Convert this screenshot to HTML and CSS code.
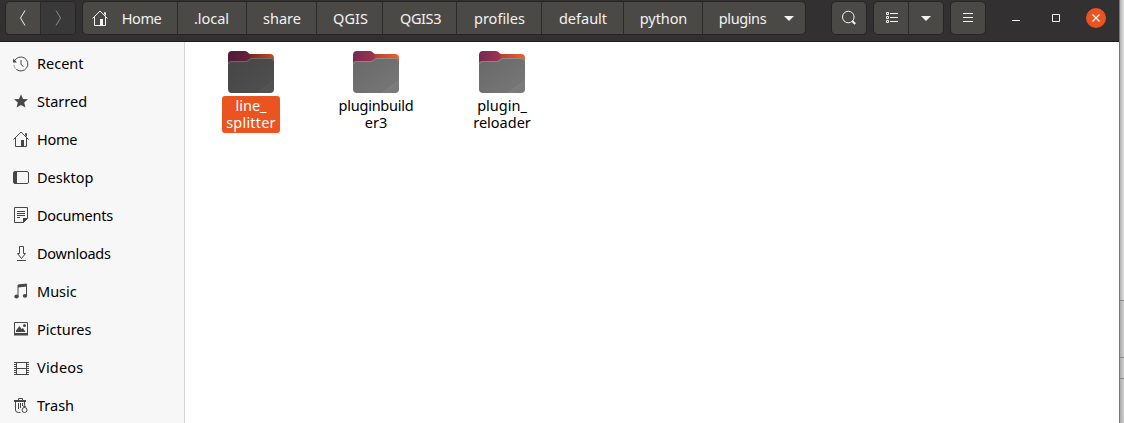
FILE: index.html
```html
<!DOCTYPE html>
<html lang="en">
<head>
<meta charset="utf-8">
<title>plugins</title>
<link rel="stylesheet" href="styles.css">
</head>
<body>
<svg class="defs" width="0" height="0">
  <defs>
    <linearGradient id="tab" x1="0" y1="0" x2="1" y2="0"><stop offset="0" stop-color="#772953"/><stop offset=".44" stop-color="#9b344c"/><stop offset=".5" stop-color="#b9432f"/><stop offset="1" stop-color="#f0602c"/></linearGradient>
    <linearGradient id="tab-selected" x1="0" y1="0" x2="1" y2="0"><stop offset="0" stop-color="#4f1b3a"/><stop offset=".44" stop-color="#642138"/><stop offset=".5" stop-color="#7a2b1f"/><stop offset="1" stop-color="#c94c20"/></linearGradient>
    <linearGradient id="front" x1="0" y1="0" x2="1" y2="1"><stop offset="0" stop-color="#686868"/><stop offset=".8" stop-color="#757575"/><stop offset=".81" stop-color="#7c7c7c"/><stop offset="1" stop-color="#777"/></linearGradient>
    <linearGradient id="front-selected" x1="0" y1="0" x2="1" y2="1"><stop offset="0" stop-color="#454545"/><stop offset=".8" stop-color="#4e4e4e"/><stop offset=".81" stop-color="#535353"/><stop offset="1" stop-color="#505050"/></linearGradient>
    <symbol id="home" viewBox="0 0 16 16"><path d="M.5 8.500 8 1l7.500 7.500M2.500 7v8.500h11V7M12.500 4.500v-2h1v3" fill="none" stroke="currentColor"/><path d="M8 9h3v6.500H8z" fill="currentColor"/></symbol>
  </defs>
</svg>
<div class="screen">
  <div class="window">
    <header class="header">
      <div class="group nav">
        <button class="btn"><svg width="16" height="16" viewBox="0 0 16 16"><path d="M10 .5 5.500 8l4.500 7.500" class="line"/></svg></button>
        <button class="btn disabled"><svg width="16" height="16" viewBox="0 0 16 16"><path d="M6 .5 10.500 8 6 15.500" class="line"/></svg></button>
      </div>
      <nav class="group path">
        <button class="btn crumb-home"><svg width="16" height="16"><use href="#home"/></svg><span>Home</span></button>
        <button class="btn crumb-local">.local</button>
        <button class="btn crumb-share">share</button>
        <button class="btn crumb-qgis">QGIS</button>
        <button class="btn crumb-qgis3">QGIS3</button>
        <button class="btn crumb-profiles">profiles</button>
        <button class="btn crumb-default">default</button>
        <button class="btn crumb-python">python</button>
        <button class="btn crumb-plugins"><span>plugins</span><svg width="10" height="5" viewBox="0 0 10 5"><path d="M0 0h10L5 5z" fill="currentColor"/></svg></button>
      </nav>
      <div class="group search"><button class="btn"><svg width="16" height="16" viewBox="0 0 16 16"><circle cx="7.300" cy="7" r="5.800" class="line"/><path d="m11.200 11 3 3" class="line handle"/></svg></button></div>
      <div class="group view">
        <button class="btn"><svg width="14" height="14" viewBox="0 0 14 14"><path d="M1.500 1.500h2v2h-2zM1.500 5.500h2v2h-2zM1.500 9.500h2v2h-2zM5 2.500h8M5 6.500h8M5 10.500h8" class="line"/></svg></button>
        <button class="btn"><svg width="10" height="5" viewBox="0 0 10 5"><path d="M0 0h10L5 5z" fill="currentColor"/></svg></button>
      </div>
      <div class="group menu"><button class="btn"><svg width="10" height="10" viewBox="0 0 10 10"><path d="M0 .5h10M0 4.500h10M0 8.500h10" class="line"/></svg></button></div>
      <div class="controls">
        <svg width="8" height="8" viewBox="0 0 8 8"><path d="M0 6.500h8" class="line"/></svg>
        <svg width="8" height="8" viewBox="0 0 8 8"><path d="M.5 .5h7v7h-7z" class="line"/></svg>
        <svg width="20" height="20" viewBox="0 0 20 20"><circle cx="10" cy="10" r="10" fill="#e95420"/><path d="m6.500 6.500 7 7m0-7-7 7" class="line cross"/></svg>
      </div>
    </header>
    <main class="body">
      <aside class="sidebar">
        <div class="place"><svg width="16" height="16" viewBox="0 0 16 16"><path d="M1.500 5A7 7 0 1 1 3.500 13.500M8 4v4.500l2.500 2" class="line"/><path d="M1 9.500A7 7 0 0 0 3.500 13.500" class="line dots"/><path d="M0 2.500v4h4z" fill="currentColor"/></svg><span>Recent</span></div>
        <div class="place"><svg width="16" height="16" viewBox="0 0 16 16"><path d="m8 1.200 2 4.700 5 .4-3.800 3.300 1.200 5L8 12l-4.400 2.600 1.200-5L1 6.300l5-.4z" fill="currentColor"/></svg><span>Starred</span></div>
        <div class="place"><svg width="16" height="16"><use href="#home"/></svg><span class="tight">Home</span></div>
        <div class="place"><svg width="16" height="16" viewBox="0 0 16 16"><rect x=".5" y="2.500" width="15" height="12" rx="1.500" class="line"/><path d="M1 3h3v11H1z" fill="currentColor"/></svg><span>Desktop</span></div>
        <div class="place"><svg width="16" height="16" viewBox="0 0 16 16"><path d="M1.500 .5h13v11l-4 4h-9zM4 4.500h8M4 6.500h8M4 8.500h8M4 10.500h3" class="line"/><path d="M10 11h5l-5 5z" fill="currentColor"/></svg><span class="tight">Documents</span></div>
        <div class="place"><svg width="16" height="16" viewBox="0 0 16 16"><path d="M6.500 1.500h4v7h2l-4 5-4-5h2zM4 15.500h9" class="line"/></svg><span class="tight">Downloads</span></div>
        <div class="place"><svg width="16" height="16" viewBox="0 0 16 16"><path d="M5 13.500V2l8.500-1v11.500" class="line"/><path d="M5 2l9-1v2.500L5 4.500z" fill="currentColor"/><ellipse cx="3.500" cy="13.500" rx="2.200" ry="1.900" fill="currentColor"/><ellipse cx="12" cy="12.800" rx="2.200" ry="1.900" fill="currentColor"/></svg><span>Music</span></div>
        <div class="place"><svg width="16" height="16" viewBox="0 0 16 16"><path d="M1.500 1.500h13v12h-13zM1 13h14" class="line"/><path d="M3 11V9.500L6.500 5l2 3 1.500-1 2.500 4zM1 12h14v2.500H1z" fill="currentColor"/><circle cx="11.500" cy="4.500" r="1.500" fill="currentColor"/></svg><span>Pictures</span></div>
        <div class="place"><svg width="16" height="16" viewBox="0 0 16 16"><path d="M3.500 2v13M13.500 2v13M3 2.500h11M3 8.500h11M3 14.500h11" class="line"/><path d="M2 2v13M15 2v13" class="line film"/></svg><span class="loose">Videos</span></div>
        <div class="place"><svg width="16" height="16" viewBox="0 0 16 16"><path d="M5.500 3V1.500h4V3M2.500 4v9q0 2.500 3 2.500h2M5.500 6v6M7.500 6v5M9.500 6v3M11.500 4v4" class="line"/><path d="M1 3h12v2H1z" fill="currentColor"/><circle cx="11.500" cy="13" r="2.500" class="line"/><circle cx="11.500" cy="9.500" r="1.200" fill="currentColor"/></svg><span>Trash</span></div>
      </aside>
      <section class="files">
        <div class="file selected">
          <svg width="46" height="43" viewBox="0 0 46 43"><path d="M0 4q0-4 4-4h13q2 0 3 1.500t3 1.500h19q4 0 4 4v14H0z" fill="url(#tab-selected)"/><path d="M0 13q0-3 3-3h14q2 0 3.500-1.500t3-1.500H43q3 0 3 3v28q0 4-4 4H4q-4 0-4-4z" fill="url(#front-selected)"/><path d="M.5 13q0-2.500 3-2.500h14q2 0 3.500-1.500t3-1.500H43q2.500 0 2.500 2.500" class="edge"/></svg>
          <div class="name"><span>line_</span><span class="loose">splitter</span></div>
        </div>
        <div class="file">
          <svg width="46" height="43" viewBox="0 0 46 43"><path d="M0 4q0-4 4-4h13q2 0 3 1.500t3 1.500h19q4 0 4 4v14H0z" fill="url(#tab)"/><path d="M0 13q0-3 3-3h14q2 0 3.500-1.500t3-1.500H43q3 0 3 3v28q0 4-4 4H4q-4 0-4-4z" fill="url(#front)"/><path d="M.5 13q0-2.500 3-2.500h14q2 0 3.500-1.500t3-1.500H43q2.500 0 2.500 2.500" class="edge"/></svg>
          <div class="name"><span class="tight">pluginbuild</span><span>er3</span></div>
        </div>
        <div class="file">
          <svg width="46" height="43" viewBox="0 0 46 43"><path d="M0 4q0-4 4-4h13q2 0 3 1.500t3 1.500h19q4 0 4 4v14H0z" fill="url(#tab)"/><path d="M0 13q0-3 3-3h14q2 0 3.500-1.500t3-1.500H43q3 0 3 3v28q0 4-4 4H4q-4 0-4-4z" fill="url(#front)"/><path d="M.5 13q0-2.500 3-2.500h14q2 0 3.500-1.500t3-1.500H43q2.500 0 2.500 2.500" class="edge"/></svg>
          <div class="name"><span>plugin_</span><span>reloader</span></div>
        </div>
      </section>
    </main>
  </div>
  <div class="behind"><div class="pane top"></div><div class="pane middle"></div><div class="pane low"></div><div class="pane rest"></div></div>
</div>
</body>
</html>
```

FILE: styles.css
```css
* { box-sizing: border-box; }
body { margin: 0; overflow: hidden; font: 14.5px/18px "Noto Sans", "Open Sans", sans-serif; color: #000; }
.defs { display: block; height: 0; }
.screen { display: flex; width: 1124px; height: 423px; overflow: hidden; }
.window { width: 1119px; display: flex; flex-direction: column; }

/* Header bar */
.header { flex: none; height: 42px; padding: 1px 13px 0 5px; display: flex; align-items: flex-start; background: #323031; border-bottom: 1px solid #1d1b1c; color: #f2f2f2; }
.group { display: flex; height: 34px; border: 1px solid #262425; border-radius: 5px; overflow: hidden; background: #4b4946; }
.btn { flex: 1 1 auto; display: flex; align-items: center; justify-content: center; padding: 0; border: 0; border-right: 1px solid #2b292a; background: none; color: inherit; font: inherit; }
.btn:last-child { border-right: 0; }
.disabled { background: #3a3939; color: #8c8b8b; }
.nav { width: 71px; margin-right: 6px; }
.path { width: 724px; margin-right: 25px; }
.path .btn { flex: none; padding: 0 0 1px 1px; }
.path .crumb-home { width: 95px; gap: 14px; padding-right: 8px; letter-spacing: -.4px; }
.path .crumb-home svg { margin-top: 1px; }
.path .crumb-local { width: 69px; padding-right: 2px; }
.path .crumb-share { width: 70px; }
.path .crumb-qgis { width: 66px; padding-left: 2px; }
.path .crumb-qgis3 { width: 74px; padding-left: 2px; letter-spacing: -.4px; }
.path .crumb-profiles { width: 85px; }
.path .crumb-default { width: 82px; }
.path .crumb-python { width: 79px; letter-spacing: -.1px; }
.path .crumb-plugins { width: 102px; gap: 18px; padding-left: 5px; letter-spacing: -.4px; }
.path .crumb-plugins svg { margin-top: 2px; }
.search, .menu { width: 36px; }
.search { margin-right: 6px; }
.view { width: 71px; margin-right: 6px; }
.view .btn:first-child { flex: none; width: 35px; padding-left: 1px; }
.controls { display: flex; align-items: center; height: 34px; margin-left: auto; }
.controls svg:nth-child(1) { margin-right: 32px; }
.controls svg:nth-child(2) { margin-right: 26px; }

/* Icon strokes */
.line { fill: none; stroke: currentColor; stroke-width: 1; }
.handle { stroke-width: 2; }
.cross { stroke-width: 1.4; }
.dots { stroke-dasharray: 1 1; }
.film { stroke-width: 2; stroke-dasharray: 1 1; }
.edge { fill: none; stroke: #fff; stroke-opacity: .2; }

/* Places */
.body { flex: 1; min-height: 0; display: flex; background: #fff; }
.sidebar { width: 185px; padding-top: 2px; border-right: 1px solid #d5d5d5; background: #f7f7f7; overflow: hidden; }
.place { height: 38px; padding-left: 13px; display: flex; align-items: center; gap: 8px; color: #474747; }
.place:first-child svg, .place:nth-child(9) svg { margin-top: 1px; }
.place span { color: #000; padding-bottom: 1px; }
.tight { letter-spacing: -.25px; }
.loose { letter-spacing: .2px; }

/* Files */
.files { display: grid; grid-template-columns: 126px 124px 128px; padding: 9px 0 0 3px; }
.file { display: flex; flex-direction: column; align-items: center; }
.file svg { flex: none; }
.name { width: max-content; margin-top: 2px; padding: 1px 4px 2px; border-radius: 3px; line-height: 17px; text-align: center; white-space: nowrap; }
.name span { display: block; }
.selected .name { color: #fff; background: #e95420; }

/* Window edge behind */
.behind { width: 5px; display: flex; flex-direction: column; border-left: 1px solid #777; background: #c8c8c8; }
.pane { flex: none; border-bottom: 1px solid #888; background: linear-gradient(90deg, #aaa, #d0d0d0); }
.top { height: 301px; background: linear-gradient(90deg, #b0b0b0, #e4e4e4); }
.middle { height: 57px; }
.low { height: 21px; }
.rest { height: 44px; border: 0; }
```
